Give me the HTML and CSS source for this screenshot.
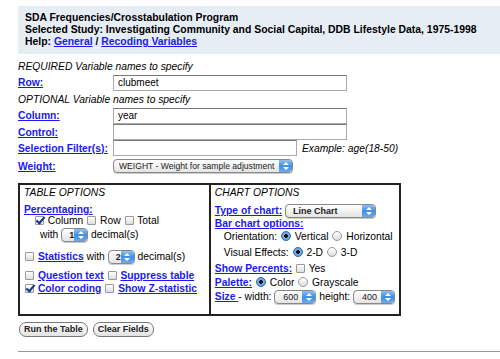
FILE: index.html
```html
<!DOCTYPE html>
<html lang="en">
<head>
    <meta charset="UTF-8">
    <title>SDA Frequencies/Crosstabulation Program</title>
    <link rel="stylesheet" href="styles.css">
</head>
<body>
    <div class="header">
        <div>SDA Frequencies/Crosstabulation Program</div>
        <div>Selected Study: Investigating Community and Social Capital, DDB Lifestyle Data, 1975-1998</div>
        <div>Help: <a href="#">General</a> / <a href="#">Recoding Variables</a></div>
    </div>

    <form class="vars">
        <div class="note first">REQUIRED Variable names to specify</div>
        <div class="field">
            <a href="#" class="label">Row:</a>
            <input type="text" class="text" value="clubmeet">
        </div>
        <div class="note">OPTIONAL Variable names to specify</div>
        <div class="field">
            <a href="#" class="label">Column:</a>
            <input type="text" class="text" value="year">
        </div>
        <div class="field tight">
            <a href="#" class="label">Control:</a>
            <input type="text" class="text">
        </div>
        <div class="field tight">
            <a href="#" class="label">Selection Filter(s):</a>
            <input type="text" class="text short">
            <span class="example">Example: age(18-50)</span>
        </div>
        <div class="field weight">
            <a href="#" class="label">Weight:</a>
            <span class="sel w-weight">WEIGHT - Weight for sample adjustment<span class="arr"><svg width="8" height="10" viewBox="0 0 8 10"><path d="M1 4 L4 1 L7 4 Z M1 6 L4 9 L7 6 Z" fill="#fff"/></svg></span></span>
        </div>

        <table class="options">
            <tr>
                <td class="tbl-opts">
                    <div class="title">TABLE OPTIONS</div>
                    <div class="line pctg"><a href="#">Percentaging:</a></div>
                    <div class="line indent">
                        <span class="cb checked"></span> Column
                        <span class="cb"></span> Row
                        <span class="cb"></span> Total
                    </div>
                    <div class="line indent2">
                        with <span class="sel w-small">1<span class="arr"><svg width="8" height="10" viewBox="0 0 8 10"><path d="M1 4 L4 1 L7 4 Z M1 6 L4 9 L7 6 Z" fill="#fff"/></svg></span></span> decimal(s)
                    </div>
                    <div class="line stats">
                        <span class="cb"></span> <a href="#">Statistics</a> with
                        <span class="sel w-small">2<span class="arr"><svg width="8" height="10" viewBox="0 0 8 10"><path d="M1 4 L4 1 L7 4 Z M1 6 L4 9 L7 6 Z" fill="#fff"/></svg></span></span> decimal(s)
                    </div>
                    <div class="line qtext">
                        <span class="cb"></span> <a href="#">Question text</a>
                        <span class="cb"></span> <a href="#">Suppress table</a>
                    </div>
                    <div class="line">
                        <span class="cb checked"></span> <a href="#">Color coding</a>
                        <span class="cb"></span> <a href="#">Show Z-statistic</a>
                    </div>
                </td>
                <td class="chart-opts">
                    <div class="title">CHART OPTIONS</div>
                    <div class="line type">
                        <a href="#">Type of chart:</a>
                        <span class="sel w-chart">Line Chart<span class="arr"><svg width="8" height="10" viewBox="0 0 8 10"><path d="M1 4 L4 1 L7 4 Z M1 6 L4 9 L7 6 Z" fill="#fff"/></svg></span></span>
                    </div>
                    <div class="line"><a href="#">Bar chart options:</a></div>
                    <div class="line indent3">
                        Orientation: <span class="rb on"></span> Vertical <span class="rb"></span> Horizontal
                    </div>
                    <div class="line indent3 fx">
                        Visual Effects: <span class="rb on"></span> 2-D <span class="rb"></span> 3-D
                    </div>
                    <div class="line pct">
                        <a href="#">Show Percents:</a> <span class="cb"></span> Yes
                    </div>
                    <div class="line palette">
                        <a href="#">Palette:</a> <span class="rb on"></span> Color <span class="rb"></span> Grayscale
                    </div>
                    <div class="line size">
                        <a href="#">Size </a> - width:
                        <span class="sel w-size">600<span class="arr"><svg width="8" height="10" viewBox="0 0 8 10"><path d="M1 4 L4 1 L7 4 Z M1 6 L4 9 L7 6 Z" fill="#fff"/></svg></span></span>
                        height:
                        <span class="sel w-size">400<span class="arr"><svg width="8" height="10" viewBox="0 0 8 10"><path d="M1 4 L4 1 L7 4 Z M1 6 L4 9 L7 6 Z" fill="#fff"/></svg></span></span>
                    </div>
                </td>
            </tr>
        </table>

        <div class="actions">
            <button type="button" class="btn">Run the Table</button>
            <button type="button" class="btn">Clear Fields</button>
        </div>
    </form>
    <hr class="rule">
</body>
</html>
```

FILE: styles.css
```css
body {
    margin: 0;
    padding: 6px 0 0 18px;
    font-family: "Liberation Sans", Arial, sans-serif;
    font-size: 10.3px;
    color: #000;
    background: #fff;
}
a {
    color: #1a1aee;
    font-weight: bold;
    text-decoration: underline;
}
.header {
    background: #e7edf5;
    height: 36px;
    padding: 6px 7px;
    font-weight: bold;
    font-size: 10.4px;
    line-height: 12px;
    white-space: nowrap;
}
.vars {
    margin: 0;
}
.note {
    font-style: italic;
    height: 15px;
    line-height: 15px;
    margin-top: 1px;
}
.note.first {
    margin-top: 5px;
}
.field {
    display: flex;
    align-items: center;
    height: 17px;
    white-space: nowrap;
}
.field.tight {
    height: 16px;
}
.field.weight {
    height: 16px;
    padding-top: 2px;
}
.field .label {
    width: 95px;
    flex: none;
}
.text {
    box-sizing: border-box;
    width: 234px;
    height: 16px;
    margin: 0;
    padding: 0 4px;
    border: 1px solid #aaa;
    border-top-color: #777;
    font-family: "Liberation Sans", Arial, sans-serif;
    font-size: 10px;
    color: #000;
}
.text.short {
    width: 184px;
}
.example {
    font-style: italic;
    margin-left: 5px;
}
.sel {
    position: relative;
    display: inline-block;
    box-sizing: border-box;
    height: 14px;
    line-height: 12px;
    padding: 0 0 0 7px;
    border: 1px solid #888;
    border-radius: 4px;
    background: linear-gradient(#fff, #e4e4e4);
    font-size: 9px;
    font-weight: bold;
    vertical-align: middle;
    color: #222;
    box-shadow: 0 1px 0 #ccc;
    white-space: nowrap;
    overflow: hidden;
}
.sel .arr {
    position: absolute;
    right: 0;
    top: 0;
    bottom: 0;
    width: 13px;
    border-radius: 0 3px 3px 0;
    background: linear-gradient(#8fc0f2, #3f8ee0 50%, #6aaaf0);
    display: flex;
    align-items: center;
    justify-content: center;
}
.w-weight {
    width: 180px;
    font-weight: normal;
    font-size: 8.6px;
    padding-left: 5px;
}
.w-small { width: 27px; }
.w-chart { width: 91px; }
.w-size { width: 42px; padding-left: 8px; font-weight: normal; }
.options {
    margin-top: 9px;
    border-collapse: collapse;
    border: 2px solid #222;
    width: 383px;
    height: 133px;
}
.options td {
    vertical-align: top;
    border: 2px solid #222;
    padding: 1px 4px 0 4px;
}
.tbl-opts {
    width: 184px;
}
.title {
    font-style: italic;
    height: 14px;
    line-height: 14px;
}
.line {
    line-height: 13px;
    height: 13px;
    white-space: nowrap;
}
.tbl-opts .title { margin-bottom: 3px; }
.pctg { height: 12px; }
.indent { padding-left: 10px; height: 11px; line-height: 11px; }
.indent2 { padding-left: 16px; margin-top: 2px; }
.stats { margin-top: 9px; }
.qtext { margin-top: 6px; }
.chart-opts .title { margin-bottom: 4px; }
.indent3 { padding-left: 9px; }
.fx { margin-top: 3px; }
.pct { margin-top: 3px; }
.palette { margin-top: 1px; }
.size { margin-top: 1px; }
.cb {
    display: inline-block;
    box-sizing: border-box;
    width: 9px;
    height: 9px;
    border: 1px solid #999;
    border-radius: 1px;
    background: linear-gradient(#fff, #ddd);
    vertical-align: -1px;
    margin: 0 1px;
    position: relative;
}
.cb.checked::after {
    content: "";
    position: absolute;
    left: 2px;
    top: -2px;
    width: 3px;
    height: 7px;
    border: solid #14328a;
    border-width: 0 2px 2px 0;
    transform: rotate(40deg);
}
.rb {
    display: inline-block;
    box-sizing: border-box;
    width: 10px;
    height: 10px;
    border: 1px solid #999;
    border-radius: 50%;
    background: linear-gradient(#fff, #ddd);
    vertical-align: -1px;
    margin: 0 1px;
    position: relative;
}
.rb.on {
    background: radial-gradient(circle, #111 0 1.6px, #7fb3ea 2.2px, #3a86d8);
    border-color: #3a6ea8;
}
.actions {
    margin-top: 6px;
    display: flex;
    gap: 5px;
    padding-left: 1px;
}
.btn {
    height: 15px;
    padding: 0 4px;
    border: 1px solid #777;
    border-radius: 7px;
    background: linear-gradient(#fff, #e2e2e2);
    font-family: "Liberation Sans", Arial, sans-serif;
    font-size: 9px;
    font-weight: bold;
    color: #222;
    line-height: 13px;
}
.rule {
    margin: 14px 0 0 0;
    border: 0;
    border-top: 1px solid #999;
}
```
